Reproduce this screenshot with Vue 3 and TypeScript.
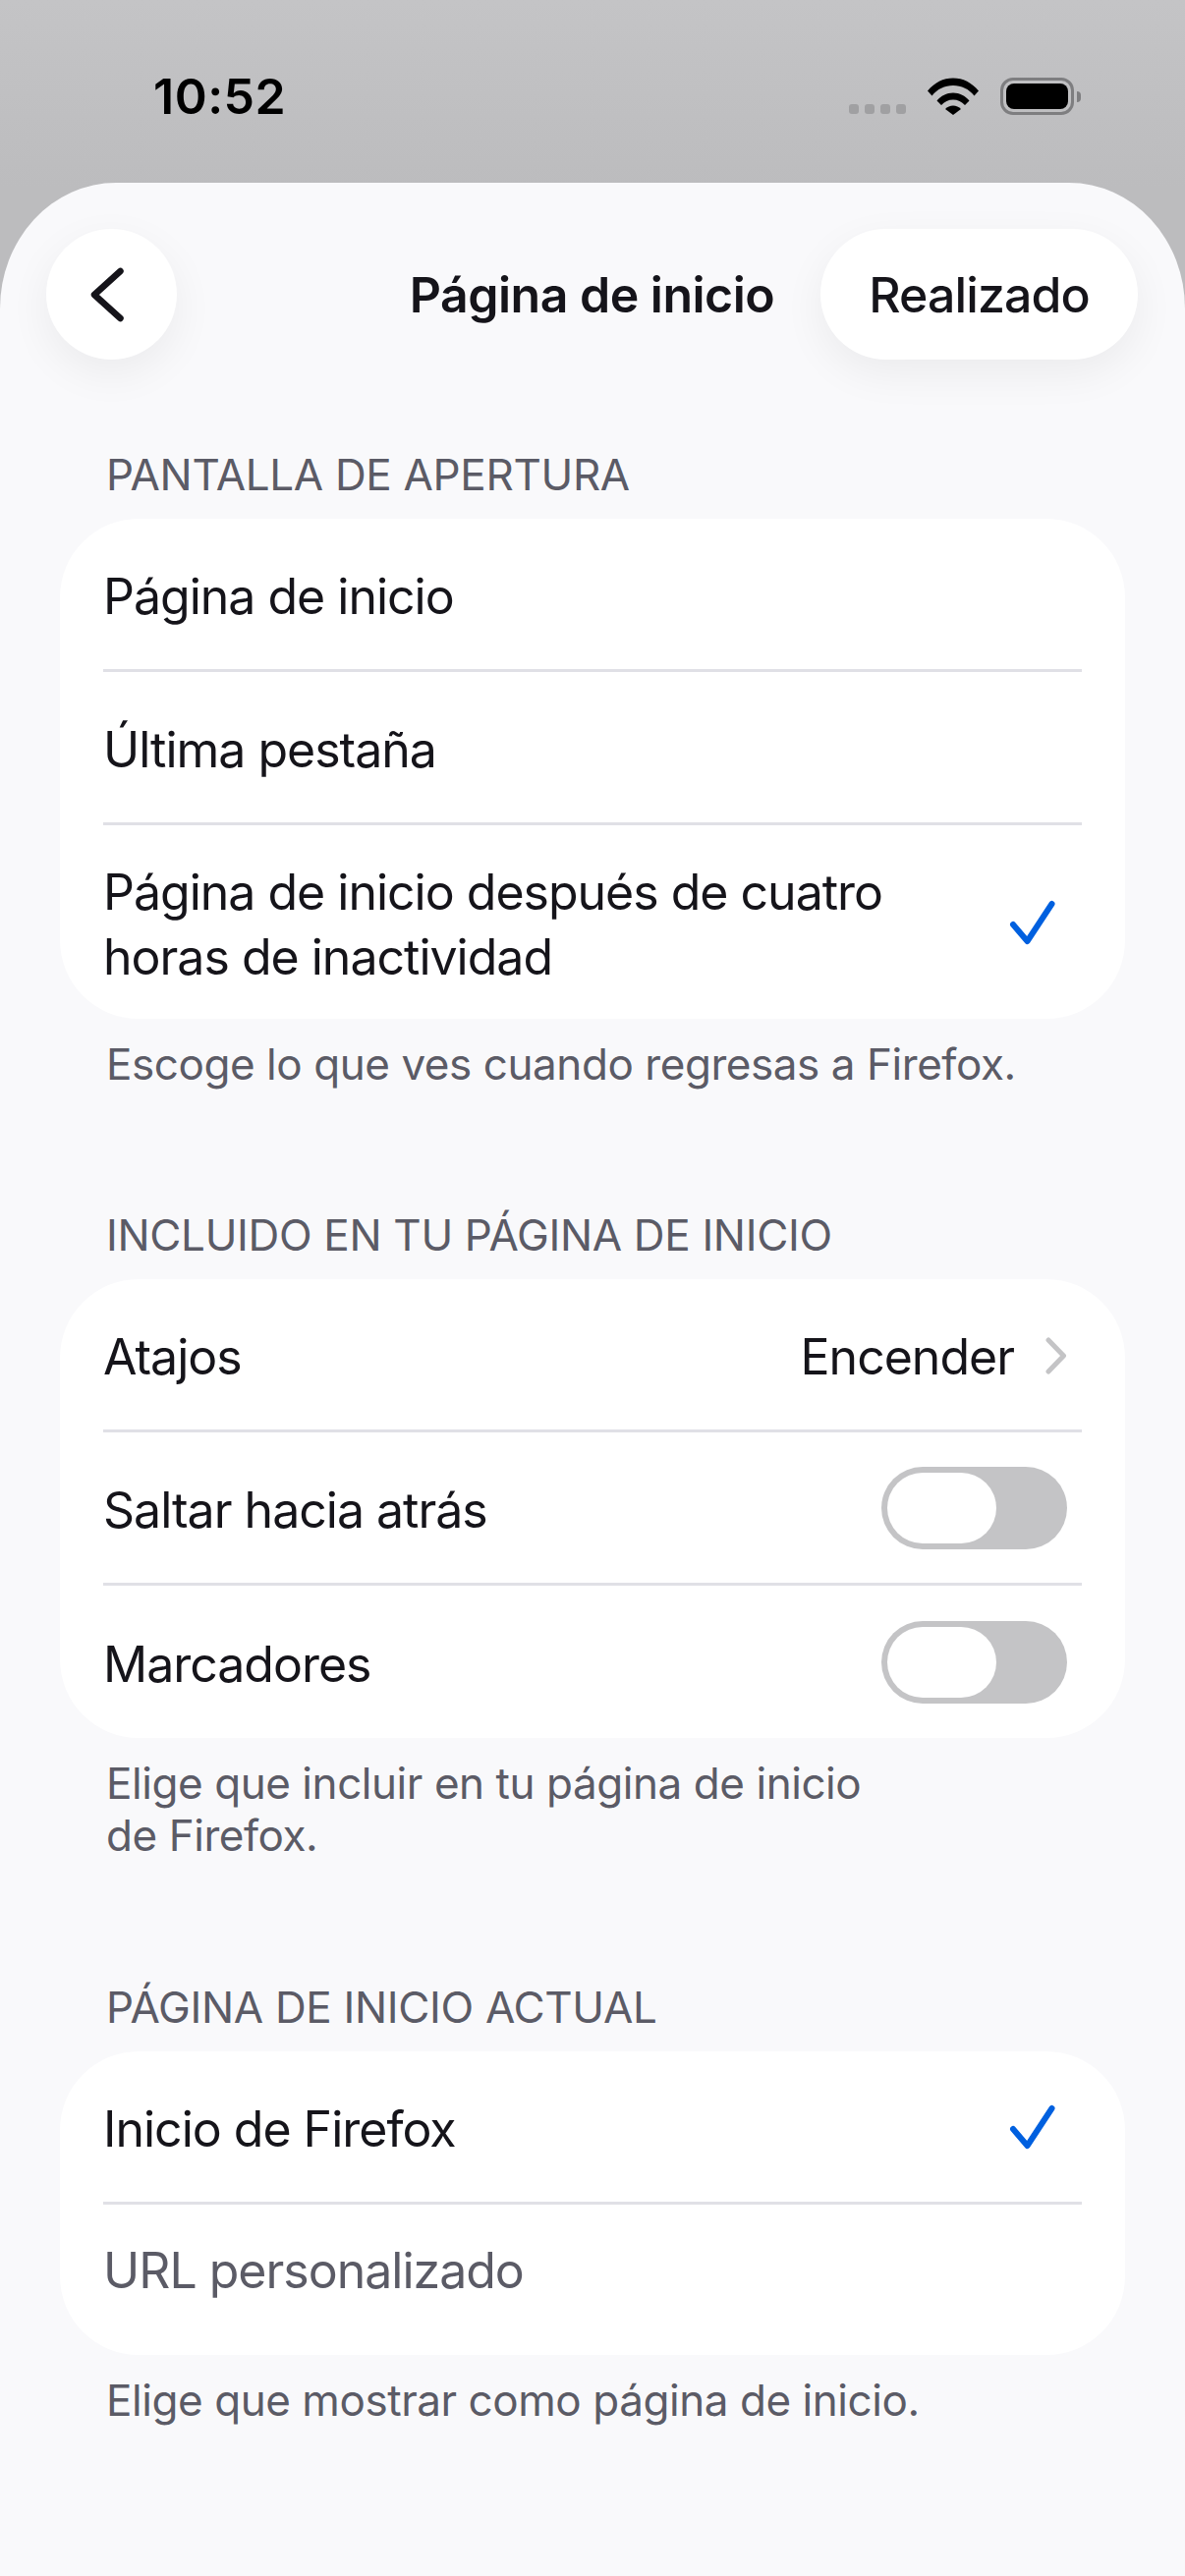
<template>
  <div class="screen">
    <div class="status">
      <span class="time">10:52</span>
      <div class="status-icons">
        <div class="dots">
          <i v-for="n in 4" :key="n"></i>
        </div>
        <svg class="wifi" width="52" height="38" viewBox="0 0 52 38">
          <path d="M0 13.500C7 5 16 0.500 26 0.500S45 5 52 13.500L47.500 18.500C42 11.500 34.500 8 26 8S10 11.500 4.500 18.500Z" />
          <path d="M9.500 23.500C13.500 18.500 19.500 15.500 26 15.500S38.500 18.500 42.500 23.500L38 28C35 24.500 30.500 22.500 26 22.500S17 24.500 14 28Z" />
          <path d="M18 32C20 29.800 23 28.500 26 28.500S32 29.800 34 32L26 38Z" />
        </svg>
        <div class="battery">
          <div class="battery-body"><div class="battery-fill"></div></div>
          <div class="battery-tip"></div>
        </div>
      </div>
    </div>

    <div class="sheet">
      <div class="nav">
        <button class="round back">
          <svg width="42" height="58" viewBox="0 0 42 58">
            <path d="M33.500 5L7 29L33.500 53" fill="none" stroke="#15141a" stroke-width="6.500" stroke-linecap="round" stroke-linejoin="round" />
          </svg>
        </button>
        <div class="title">Página de inicio</div>
        <button class="round done">Realizado</button>
      </div>

      <section>
        <h2>PANTALLA DE APERTURA</h2>
        <div class="card">
          <div class="row"><span>Página de inicio</span></div>
          <div class="sep"></div>
          <div class="row"><span>Última pestaña</span></div>
          <div class="sep"></div>
          <div class="row tall">
            <span class="wrap">Página de inicio después de cuatro horas de inactividad</span>
            <svg class="check" width="48" height="46" viewBox="0 0 48 46">
              <path d="M5 25L19.500 42L44.500 4" fill="none" stroke="#0060df" stroke-width="6" stroke-linecap="round" stroke-linejoin="round" />
            </svg>
          </div>
        </div>
        <p class="foot">Escoge lo que ves cuando regresas a Firefox.</p>
      </section>

      <section>
        <h2>INCLUIDO EN TU PÁGINA DE INICIO</h2>
        <div class="card">
          <div class="row">
            <span>Atajos</span>
            <div class="value">
              <span>Encender</span>
              <svg width="22" height="38" viewBox="0 0 22 38">
                <path d="M3 3L18.500 19L3 35" fill="none" stroke="#c4c4c6" stroke-width="5" stroke-linecap="round" stroke-linejoin="round" />
              </svg>
            </div>
          </div>
          <div class="sep"></div>
          <div class="row">
            <span>Saltar hacia atrás</span>
            <div class="toggle"><div class="knob"></div></div>
          </div>
          <div class="sep"></div>
          <div class="row last">
            <span>Marcadores</span>
            <div class="toggle"><div class="knob"></div></div>
          </div>
        </div>
        <p class="foot narrow">Elige que incluir en tu página de inicio de Firefox.</p>
      </section>

      <section>
        <h2>PÁGINA DE INICIO ACTUAL</h2>
        <div class="card">
          <div class="row">
            <span>Inicio de Firefox</span>
            <svg class="check" width="48" height="46" viewBox="0 0 48 46">
              <path d="M5 25L19.500 42L44.500 4" fill="none" stroke="#0060df" stroke-width="6" stroke-linecap="round" stroke-linejoin="round" />
            </svg>
          </div>
          <div class="sep"></div>
          <div class="row muted"><span>URL personalizado</span></div>
        </div>
        <p class="foot">Elige que mostrar como página de inicio.</p>
      </section>
    </div>
  </div>
</template>

<script setup lang="ts">
</script>

<style>
html,
body {
  margin: 0;
  background: #bdbdbf;
}
</style>

<style scoped>
.screen {
  width: 1206px;
  height: 2622px;
  overflow: hidden;
  background: linear-gradient(#c4c4c6, #bcbcbe 190px, #bcbcbe);
  font-family: Inter, "Liberation Sans", sans-serif;
  color: #15141a;
}
.status {
  height: 186px;
  display: flex;
  justify-content: space-between;
  align-items: flex-start;
  box-sizing: border-box;
  padding: 66px 106px 0 156px;
}
.time {
  font-size: 50px;
  line-height: 64px;
  font-weight: 600;
  letter-spacing: 0.5px;
  color: #000;
}
.status-icons {
  display: flex;
  align-items: flex-start;
  padding-top: 13px;
}
.dots {
  display: flex;
  gap: 6px;
  margin: 27px 22px 0 0;
}
.dots i {
  width: 10px;
  height: 10px;
  border-radius: 3px;
  background: #a0a0a2;
}
.wifi {
  fill: #000;
  margin-right: 22px;
}
.battery {
  display: flex;
  align-items: center;
}
.battery-body {
  width: 75px;
  height: 38px;
  box-sizing: border-box;
  border: 3px solid #7e7e80;
  border-radius: 13px;
  padding: 3px;
}
.battery-fill {
  height: 100%;
  background: #000;
  border-radius: 8px;
}
.battery-tip {
  width: 4px;
  height: 11px;
  margin-left: 3px;
  background: #7e7e80;
  border-radius: 0 4px 4px 0;
}
.sheet {
  height: 2436px;
  box-sizing: border-box;
  padding-top: 47px;
  background: #f9f9fb;
  border-radius: 118px 118px 0 0 / 128px 128px 0 0;
}
.nav {
  display: grid;
  grid-template-columns: 1fr auto 1fr;
  align-items: center;
  padding: 0 48px 0 47px;
  margin-bottom: 92px;
}
.round {
  height: 133px;
  border: 0;
  background: #fff;
  border-radius: 67px;
  box-shadow: 0 14px 44px rgba(0, 0, 0, 0.06);
  color: #15141a;
  font: inherit;
  font-size: 50px;
  font-weight: 500;
  letter-spacing: -0.9px;
  padding: 0;
}
.back {
  width: 133px;
  justify-self: start;
  display: flex;
  align-items: center;
  justify-content: center;
}
.back svg {
  margin-right: 8px;
}
.done {
  width: 323px;
  justify-self: end;
}
.title {
  font-size: 50px;
  font-weight: 560;
  letter-spacing: -0.5px;
  white-space: nowrap;
}
section {
  margin-bottom: 122px;
}
h2 {
  margin: 0 0 20px;
  padding-left: 108px;
  font-size: 44px;
  line-height: 50px;
  font-weight: 400;
  letter-spacing: -0.33px;
  color: #5b5b66;
}
.card {
  margin: 0 61px;
  background: #fff;
  border-radius: 80px;
  overflow: hidden;
}
.row {
  min-height: 153px;
  box-sizing: border-box;
  display: flex;
  align-items: center;
  justify-content: space-between;
  padding: 0 59px 0 44px;
  font-size: 50px;
  line-height: 66px;
  letter-spacing: -1px;
}
.row span {
  padding-top: 4px;
}
.tall {
  min-height: 197px;
}
.last {
  min-height: 155px;
}
.wrap {
  width: 880px;
}
.muted {
  color: #5b5b66;
}
.muted span {
  padding-bottom: 23px;
}
.sep {
  height: 3px;
  margin: 0 44px;
  background: #e0e0e6;
}
.check {
  margin-right: 12px;
}
.value {
  display: flex;
  align-items: center;
  gap: 32px;
}
.value svg {
  margin-top: 3px;
}
.toggle {
  width: 189px;
  height: 84px;
  box-sizing: border-box;
  padding: 6px;
  border-radius: 42px;
  background: #c4c4c6;
}
.knob {
  width: 111px;
  height: 72px;
  border-radius: 36px;
  background: #fff;
}
.foot {
  margin: 20px 0 0;
  padding: 0 108px;
  font-size: 44px;
  line-height: 53px;
  letter-spacing: -0.44px;
  color: #5b5b66;
}
.narrow {
  padding-right: 308px;
  padding-bottom: 1px;
}
</style>
